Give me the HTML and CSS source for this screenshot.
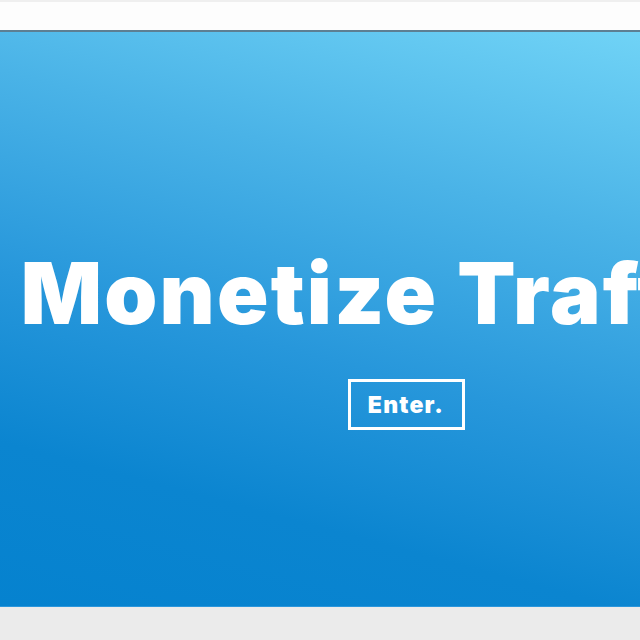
FILE: index.html
```html
<!DOCTYPE html>
<html>
<head>
<meta charset="utf-8">
<link rel="stylesheet" href="styles.css">
</head>
<body>
<div class="top-strip"></div>
<header class="navbar"></header>
<main class="hero">
  <div class="hero-inner">
    <h1 class="title">Monetize Traffic.</h1>
    <a class="enter-btn" href="#">Enter.</a>
  </div>
</main>
<footer class="footer"></footer>
</body>
</html>
```
FILE: styles.css
```css
html, body {
  margin: 0;
  padding: 0;
}
body {
  background: #ebebeb;
  font-family: Inter, "Liberation Sans", sans-serif;
  width: 640px;
  height: 640px;
  overflow: hidden;
}
.top-strip {
  height: 2px;
  background: #efefef;
}
.navbar {
  height: 28px;
  background: #fdfdfd;
  border-bottom: 2px solid #5d7f93;
}
.hero {
  height: 574px;
  border-bottom: 1px solid #2a96dc;
  background: linear-gradient(195deg, #70d3f6 0%, #4ab3e7 28%, #2797db 55%, #0b85d0 78%, #0582cf 100%);
  overflow: hidden;
}
.hero-inner {
  width: 812px;
  display: flex;
  flex-direction: column;
  align-items: center;
  padding-top: 212px;
}
.title {
  margin: 0;
  color: #fff;
  font-size: 85px;
  font-weight: 900;
  line-height: 100px;
  white-space: nowrap;
  letter-spacing: 2.2px;
}
.enter-btn {
  margin-top: 35px;
  border: 3px solid #fff;
  color: #fff;
  text-decoration: none;
  font-weight: 900;
  font-size: 23px;
  letter-spacing: 1.2px;
  display: flex;
  align-items: center;
  justify-content: center;
  box-sizing: border-box;
  width: 117px;
  height: 51px;
}
.footer {
  height: 33px;
  background: #ebebeb;
}
```
